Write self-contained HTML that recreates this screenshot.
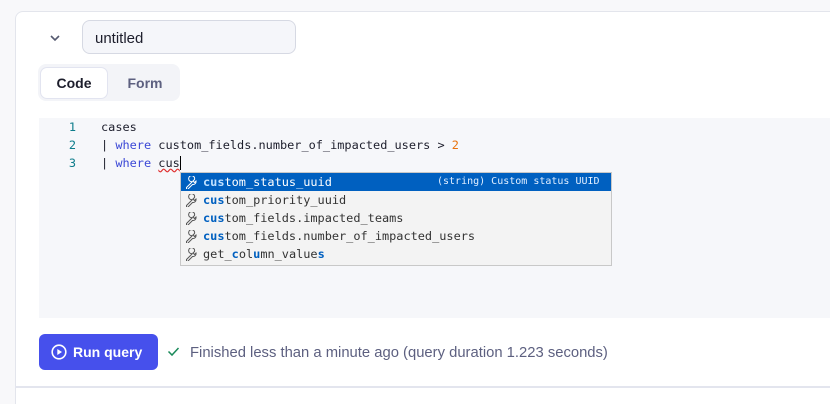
<!DOCTYPE html>
<html style="overflow:hidden;height:404px"><head><style>
body{margin:0;width:830px;height:404px;background:#f8f8fa;font-family:"Liberation Sans",sans-serif;overflow:hidden;position:relative}
.card{position:absolute;left:15px;top:11px;width:830px;height:400px;background:#fff;border:1px solid #e3e5ec;border-radius:8px}
.chev{position:absolute;left:49px;top:33px}
.inp{position:absolute;left:82px;top:20px;width:214px;height:34px;box-sizing:border-box;border:1px solid #d6d9e3;border-radius:8px;background:#f5f6fa;font-size:15px;color:#1d1e2c;padding:9px 12px}
.tabs{position:absolute;left:38px;top:64px;width:142px;height:37px;background:#f3f4f8;border-radius:8px}
.t1{position:absolute;left:40px;top:67px;width:68px;height:32px;box-sizing:border-box;background:#fff;border:1px solid #e2e4f0;border-radius:7px;font-weight:bold;font-size:14px;color:#1d1e2c;text-align:center;line-height:30px}
.t2{position:absolute;left:112px;top:67px;width:66px;font-weight:bold;font-size:14px;color:#5d6080;text-align:center;line-height:32px}
.ed{position:absolute;left:39px;top:118px;width:800px;height:200px;background:#f6f7fa}
.code{position:absolute;top:118px;font-family:"DejaVu Sans Mono",monospace;font-size:11.9px;line-height:18px;color:#1d1e2c;white-space:pre}
.ln{left:60px;width:16px;text-align:right;color:#0c7c8a}
.kw{color:#3b48d6}.num{color:#e8720c}
.pop{position:absolute;left:180px;top:172px;width:432px;height:94px;box-sizing:border-box;border:1px solid #c8c8c8;background:#f3f3f3;font-family:"DejaVu Sans Mono",monospace;font-size:11.9px;color:#333}
.r{height:18px;line-height:18px;padding-left:22px;position:relative;white-space:pre}
.r svg{position:absolute;left:4px;top:3px}
.r b{color:#0060c0}
.sel{background:#0060c0;color:#fff}.sel b{color:#bfe0ff}
.btn{position:absolute;left:39px;top:334px;width:119px;height:36px;background:#4650ec;border-radius:6px;color:#fff;font-weight:bold;font-size:14px;line-height:36px}
.st{position:absolute;left:190px;top:345px;font-size:14.8px;color:#5d6080}
.hr{position:absolute;left:15px;top:386px;width:815px;height:2px;background:#e3e5ee}
.bot{position:absolute;left:16px;top:388px;width:814px;height:20px;background:#fff}
</style></head><body>
<div class="card"></div>
<svg class="chev" width="12" height="10" viewBox="0 0 12 10"><path d="M2 3l4 4 4-4" fill="none" stroke="#555a70" stroke-width="1.6"/></svg>
<div class="inp">untitled</div>
<div class="tabs"></div><div class="t1">Code</div><div class="t2">Form</div>
<div class="ed"></div>
<div class="code ln">1
2
3</div>
<div class="code" style="left:101px">cases
| <span class="kw">where</span> custom_fields.number_of_impacted_users &gt; <span class="num">2</span>
| <span class="kw">where</span> <span style="text-decoration:underline wavy #e03030">cus</span><span style="border-left:1.5px solid #000"></span></div>
<div class="pop">
<div class="r sel"><svg width="14" height="13" viewBox="0 0 14 13"><path d="M1.5 11.5l6-6a3 3 0 1 1 2-2l-1.5 1.5 1.5 1.5 1.5-1.5a3 3 0 0 1-3.5 3.5l-6 6z" fill="none" stroke="#fff" stroke-width="1"/></svg><b>cus</b>tom_status_uuid<span style="position:absolute;left:256px;color:#e0eeff;font-size:10px">(string) Custom status UUID</span></div>
<div class="r"><svg width="14" height="13" viewBox="0 0 14 13"><path d="M1.5 11.5l6-6a3 3 0 1 1 2-2l-1.5 1.5 1.5 1.5 1.5-1.5a3 3 0 0 1-3.5 3.5l-6 6z" fill="none" stroke="#555" stroke-width="1"/></svg><b>cus</b>tom_priority_uuid</div>
<div class="r"><svg width="14" height="13" viewBox="0 0 14 13"><path d="M1.5 11.5l6-6a3 3 0 1 1 2-2l-1.5 1.5 1.5 1.5 1.5-1.5a3 3 0 0 1-3.5 3.5l-6 6z" fill="none" stroke="#555" stroke-width="1"/></svg><b>cus</b>tom_fields.impacted_teams</div>
<div class="r"><svg width="14" height="13" viewBox="0 0 14 13"><path d="M1.5 11.5l6-6a3 3 0 1 1 2-2l-1.5 1.5 1.5 1.5 1.5-1.5a3 3 0 0 1-3.5 3.5l-6 6z" fill="none" stroke="#555" stroke-width="1"/></svg><b>cus</b>tom_fields.number_of_impacted_users</div>
<div class="r"><svg width="14" height="13" viewBox="0 0 14 13"><path d="M1.5 11.5l6-6a3 3 0 1 1 2-2l-1.5 1.5 1.5 1.5 1.5-1.5a3 3 0 0 1-3.5 3.5l-6 6z" fill="none" stroke="#555" stroke-width="1"/></svg>get_<b>c</b>ol<b>u</b>mn_value<b>s</b></div>
</div>
<div class="btn"><svg style="position:absolute;left:12px;top:10px" width="16" height="16" viewBox="0 0 16 16"><circle cx="8" cy="8" r="6.8" fill="none" stroke="#fff" stroke-width="1.6"/><path d="M6.3 5v6l4.7-3z" fill="#fff"/></svg><span style="position:absolute;left:34px">Run query</span></div>
<svg style="position:absolute;left:167px;top:346px" width="13" height="11" viewBox="0 0 13 11"><path d="M1.5 5.5l3.5 3.5 6.5-7" fill="none" stroke="#1a8a5a" stroke-width="1.5"/></svg>
<div class="st">Finished less than a minute ago (query duration 1.223 seconds)</div>
<div class="hr"></div>
<div class="bot"></div>
</body></html>
